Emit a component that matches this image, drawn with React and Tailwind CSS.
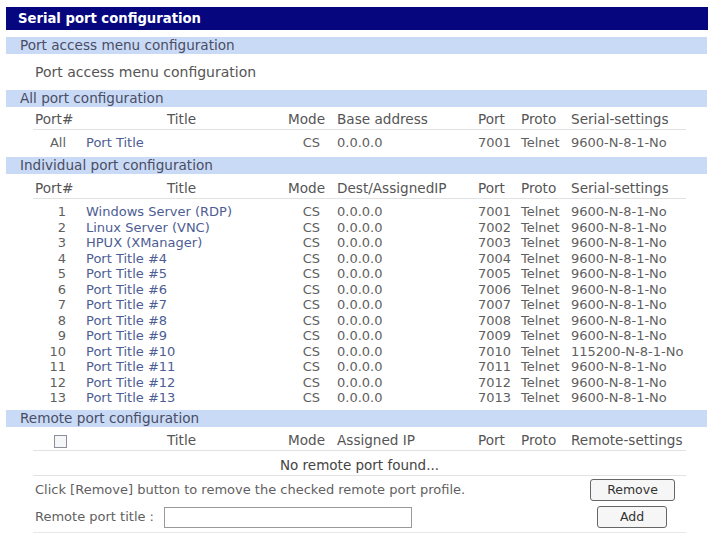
import React from 'react';

const ports = [
  ['1', 'Windows Server (RDP)', '7001', '9600-N-8-1-No'],
  ['2', 'Linux Server (VNC)', '7002', '9600-N-8-1-No'],
  ['3', 'HPUX (XManager)', '7003', '9600-N-8-1-No'],
  ['4', 'Port Title #4', '7004', '9600-N-8-1-No'],
  ['5', 'Port Title #5', '7005', '9600-N-8-1-No'],
  ['6', 'Port Title #6', '7006', '9600-N-8-1-No'],
  ['7', 'Port Title #7', '7007', '9600-N-8-1-No'],
  ['8', 'Port Title #8', '7008', '9600-N-8-1-No'],
  ['9', 'Port Title #9', '7009', '9600-N-8-1-No'],
  ['10', 'Port Title #10', '7010', '115200-N-8-1-No'],
  ['11', 'Port Title #11', '7011', '9600-N-8-1-No'],
  ['12', 'Port Title #12', '7012', '9600-N-8-1-No'],
  ['13', 'Port Title #13', '7013', '9600-N-8-1-No'],
];

const SectionBar = ({ children }) => (
  <div className="h-[17px] bg-[#c9daf6] pl-[14px] text-[13.6px] leading-[17px] text-[#4a4d62]">{children}</div>
);

const Cols = () => (
  <colgroup>
    <col className="w-[42px]" />
    <col className="w-[213px]" />
    <col className="w-[42px]" />
    <col className="w-[142px]" />
    <col className="w-[43px]" />
    <col className="w-[50px]" />
    <col className="w-[121px]" />
  </colgroup>
);

const HeadRow = ({ first, ip, settings }) => (
  <tr className="h-[20px] border-b border-[#e2e2e2] text-[13.6px] leading-[18px] text-[#555]">
    <td className="pl-[2px]">{first}</td>
    <td className="text-center">Title</td>
    <td className="text-right pr-[5px]">Mode</td>
    <td className="pl-[7px]">{ip}</td>
    <td className="pl-[6px]">Port</td>
    <td className="pl-[6px]">Proto</td>
    <td className="pl-[6px] whitespace-nowrap">{settings}</td>
  </tr>
);

export default function App() {
  return (
    <div className="min-h-[537px] bg-white pt-[7px] pl-[6px] pr-[4px] font-['DejaVu_Sans',sans-serif] text-[13.5px] text-[#5f5f5f]">
      <div className="h-[23px] bg-[#06067e] pl-[12px] text-[13.2px] font-bold leading-[23px] text-white">
        Serial port configuration
      </div>
      <div className="mt-[7px] w-[701px]">
        <SectionBar>Port access menu configuration</SectionBar>
        <div className="h-[36px] pl-[29px] text-[14px] leading-[36px] text-[#555]">Port access menu configuration</div>

        <SectionBar>All port configuration</SectionBar>
        <table className="ml-[27px] mt-[2px] w-[653px] table-fixed border-collapse">
          <Cols />
          <tbody>
            <HeadRow first="Port#" ip="Base address" settings="Serial-settings" />
            <tr className="h-[26px] text-[13px] leading-[16px]">
              <td className="pt-[2px] text-right pr-[9px]">All</td>
              <td className="pt-[2px] pl-[11px] text-[#4d5d94]">Port Title</td>
              <td className="pt-[2px] text-right pr-[10px]">CS</td>
              <td className="pt-[2px] pl-[7px]">0.0.0.0</td>
              <td className="pt-[2px] pl-[6px]">7001</td>
              <td className="pt-[2px] pl-[6px]">Telnet</td>
              <td className="pt-[2px] pl-[6px] whitespace-nowrap">9600-N-8-1-No</td>
            </tr>
          </tbody>
        </table>

        <div className="mt-[2px]">
          <SectionBar>Individual port configuration</SectionBar>
        </div>
        <table className="ml-[27px] mt-[4px] w-[653px] table-fixed border-collapse">
          <Cols />
          <tbody>
            <HeadRow first="Port#" ip="Dest/AssignedIP" settings="Serial-settings" />
            <tr className="h-[6px]"><td colSpan={7}></td></tr>
            {ports.map(([n, title, port, settings]) => (
              <tr key={n} className="h-[15.5px] text-[13px] leading-[15px]">
                <td className="text-right pr-[9px]">{n}</td>
                <td className="pl-[11px] text-[#4d5d94]">{title}</td>
                <td className="text-right pr-[10px]">CS</td>
                <td className="pl-[7px]">0.0.0.0</td>
                <td className="pl-[6px]">{port}</td>
                <td className="pl-[6px]">Telnet</td>
                <td className="pl-[6px] whitespace-nowrap">{settings}</td>
              </tr>
            ))}
          </tbody>
        </table>

        <div className="mt-[4px]">
          <SectionBar>Remote port configuration</SectionBar>
        </div>
        <table className="ml-[27px] mt-[4px] w-[653px] table-fixed border-collapse">
          <Cols />
          <tbody>
            <HeadRow
              first={
                <span className="ml-[19px] inline-block h-[13px] w-[13px] border border-[#8a8f98] bg-[#f4f6f8] align-middle" />
              }
              ip="Assigned IP"
              settings="Remote-settings"
            />
            <tr className="h-[25px] border-b border-[#e2e2e2]">
              <td colSpan={7} className="pt-[4px] text-center text-[13.5px] leading-[18px] text-[#444]">No remote port found...</td>
            </tr>
          </tbody>
        </table>
        <div className="ml-[27px] w-[653px] border-b border-[#e8e8e8] pb-[4px]">
          <div className="flex items-center justify-between pt-[3px]">
            <span className="pl-[2px] text-[13px]">Click [Remove] button to remove the checked remote port profile.</span>
            <button className="mr-[11px] h-[22px] w-[85px] rounded-[3px] border border-[#666] bg-[#f6f6f6] text-[12.5px] text-[#333]">
              Remove
            </button>
          </div>
          <div className="mt-[5px] flex items-center justify-between">
            <div className="flex items-center">
              <span className="w-[131px] pl-[2px] text-[13px]">Remote port title :</span>
              <input className="h-[21px] w-[248px] border border-[#999] bg-white" />
            </div>
            <button className="mr-[19px] h-[22px] w-[70px] rounded-[3px] border border-[#666] bg-[#f6f6f6] text-[12.5px] text-[#333]">
              Add
            </button>
          </div>
        </div>
      </div>
    </div>
  );
}
